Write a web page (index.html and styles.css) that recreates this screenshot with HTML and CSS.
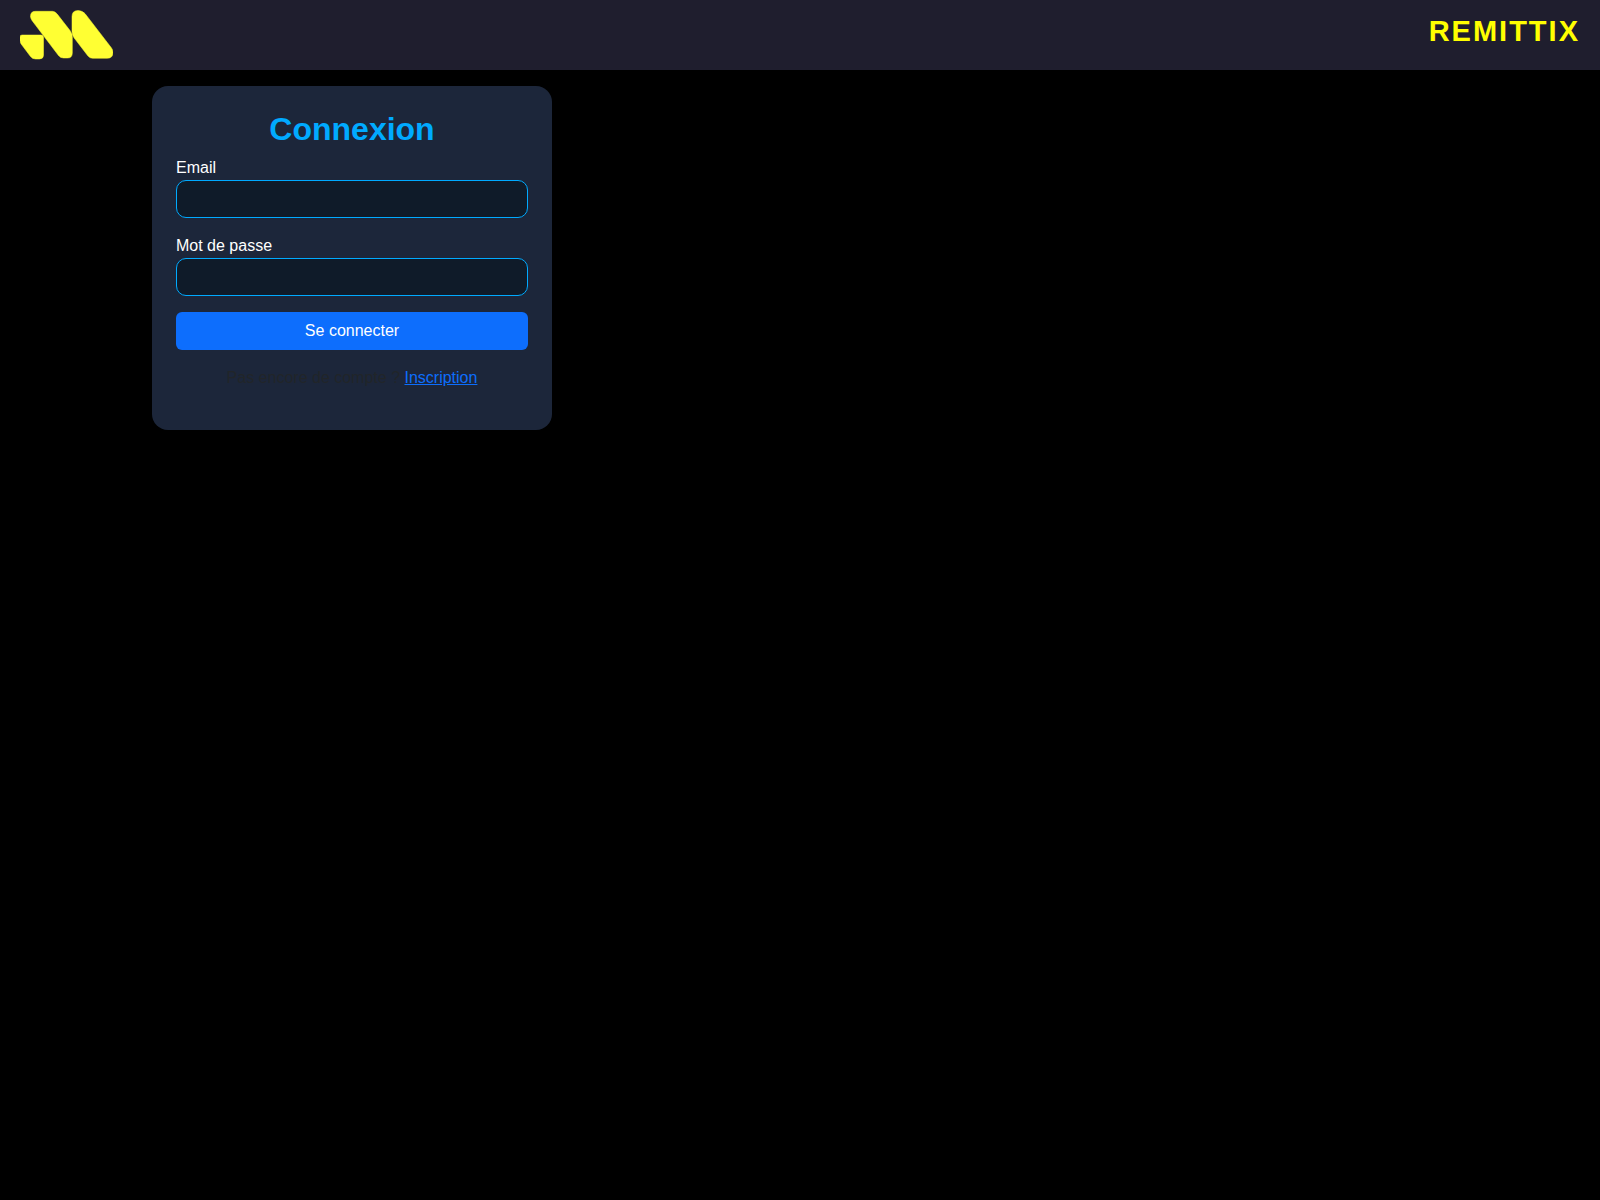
FILE: index.html
```html
<!doctype html>
<html lang="fr">
<head>
	<meta charset="UTF-8">
	<meta name="viewport" content="width=device-width, initial-scale=1">
	<title>Remittix</title>
	<link rel="stylesheet" href="styles.css">
</head>
<body>
	<header class="header">
		<svg class="logo" viewBox="0 0 93 50" aria-hidden="true">
			<path d="M2 25 H21 Q23.500 25 23.500 27.500 V45 Q23.500 49 19.500 49 H15.500 Q12.500 49 10.500 46.500 L1.500 34.500 Q0 32.500 0 30.500 V27 Q0 25 2 25 Z"/>
			<path d="M15.500 1.300 H32.500 Q35 1.300 37 3.800 L50 20.500 Q52.300 23.500 52.300 27 V43 Q52.300 48 47.500 48 H43.500 Q40.500 48 38.500 45.500 L12 10.500 Q10.500 8.500 10.500 6.300 Q10.500 1.300 15.500 1.300 Z"/>
			<path d="M58 0.500 Q62.500 0.500 65.500 4.200 L91.500 38 Q93 40 93 42.500 Q93 48.300 87 48.300 H72.500 Q70 48.300 68 46 L54.200 28 Q52 25 52 21.500 V6.500 Q52 0.500 58 0.500 Z"/>
		</svg>
		<div class="brand">REMITTIX</div>
	</header>
	<main class="container">
		<div class="card">
			<h2>Connexion</h2>
			<form>
				<div class="field">
					<label for="email">Email</label>
					<input type="email" id="email" name="email">
				</div>
				<div class="field">
					<label for="password">Mot de passe</label>
					<input type="password" id="password" name="password">
				</div>
				<button type="submit" class="btn">Se connecter</button>
			</form>
			<p>Pas encore de compte ? <a href="#">Inscription</a></p>
		</div>
	</main>
</body>
</html>
```
FILE: styles.css
```css
*{
	box-sizing: border-box;
}
body{
	margin: 0;
	background-color: #000;
	color: #212529;
	font-family: "Liberation Sans", Arial, sans-serif;
	font-size: 16px;
	line-height: 24px;
}
.header{
	display: flex;
	justify-content: space-between;
	align-items: flex-start;
	padding: 10px 20px;
	background-color: #1f1e2e;
}
.logo{
	height: 50px;
	fill: #ffff33;
	stroke: rgba(255, 255, 51, 0.5);
	stroke-width: 1;
}
.brand{
	color: #ff0;
	font-size: 29px;
	font-weight: bold;
	line-height: 43px;
	letter-spacing: 2px;
}
.container{
	max-width: 1320px;
	margin: 16px auto 0;
	padding: 0 12px;
}
.card{
	max-width: 400px;
	padding: 24px;
	border-radius: 16px;
	background-color: #1c263a;
}
.card h2{
	margin: 0 0 8px;
	color: #0af;
	font-size: 32px;
	line-height: 38px;
	text-align: center;
}
.field{
	margin-bottom: 16px;
}
.field label{
	display: block;
	color: #fff;
}
.field input{
	display: block;
	width: 100%;
	height: 38px;
	padding: 6px 12px;
	border: 1px solid #0af;
	border-radius: 10px;
	background-color: #0f1b29;
	color: #fff;
	font: inherit;
}
.btn{
	display: block;
	width: 100%;
	height: 38px;
	padding: 6px 12px;
	border: 0;
	border-radius: 6px;
	background-color: #0d6efd;
	color: #fff;
	font: inherit;
	cursor: pointer;
}
.card p{
	margin: 16px 0;
	text-align: center;
}
.card a{
	color: #0d6efd;
}
```
